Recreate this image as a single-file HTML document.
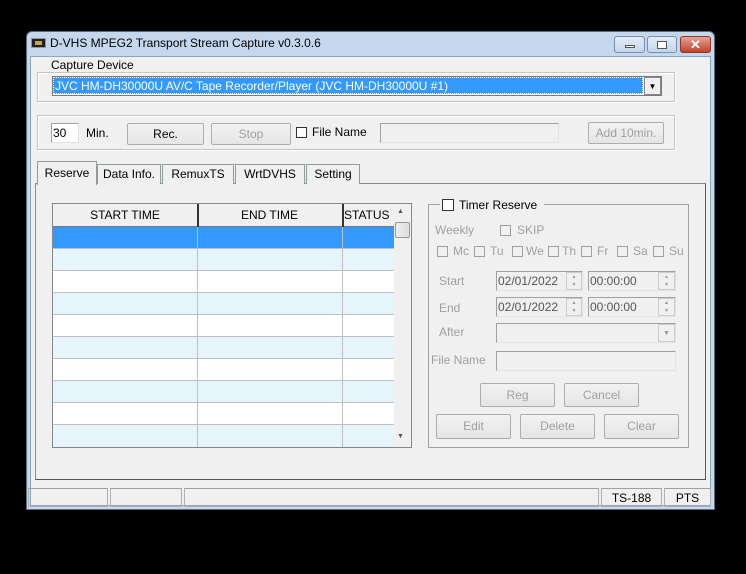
<!DOCTYPE html>
<html><head><meta charset="utf-8"><style>
*{box-sizing:border-box;margin:0;padding:0}
body{width:746px;height:574px;background:#000;position:relative;overflow:hidden;font-family:"Liberation Sans","Noto Sans CJK JP",sans-serif;font-size:12px;color:#000}
.a{position:absolute}
.win{left:26px;top:31px;width:689px;height:479px;background:#c4d7ec;border:1px solid #5a6e86;border-radius:6px 6px 0 0}
.client{left:30px;top:56px;width:681px;height:450px;background:#f0f0f0;border:1px solid #8ea3bd}
.grp{border:1px solid #c4c4c4;box-shadow:1px 1px 0 #fff,inset 1px 1px 0 #fff}
.lbl{background:#f0f0f0;padding:0 2px;white-space:nowrap}
.btn{border:1px solid #adadad;background:linear-gradient(#f2f2f2,#e5e5e5);text-align:center;line-height:20px;border-radius:2px}
.dis{color:#a0a0a0}
.edit{background:#fff;border:1px solid #a0a0a0;border-right-color:#e3e3e3;border-bottom-color:#e3e3e3}
.edd{background:#f0f0f0;border:1px solid #a0a0a0;border-right-color:#e3e3e3;border-bottom-color:#e3e3e3}
.cb{width:11px;height:11px;border:1px solid #333;background:#fff}
.cbd{width:11px;height:11px;border:1px solid #a0a0a0;background:#f0f0f0}
.tab{top:164px;height:20px;border:1px solid #919b9c;border-bottom:none;background:#f0f0f0;line-height:18px;text-align:center}
.row{left:53px;width:341px;height:22px;border-bottom:1px solid #c0c0c0}
.sb{border:1px solid #b0b0b0;border-top-color:#a0a0a0;height:19px;line-height:18px;text-align:center}
.spin{width:16px;height:18px;border:1px solid #ccc;background:#f0f0f0;font-size:5px;color:#999;text-align:center;line-height:8px}
</style></head><body>
<div class="a win"></div>
<div class="a" style="left:31px;top:38px;width:15px;height:10px;background:#222;border:1px solid #999"><div style="margin:2px 3px;height:4px;background:#c9a54a"></div></div>
<div class="a" style="left:50px;top:36px;font-size:12px">D-VHS MPEG2 Transport Stream Capture v0.3.0.6</div>
<div class="a" style="left:614px;top:36px;width:31px;height:17px;border:1px solid #7790b0;border-radius:3px;background:linear-gradient(#e3ecf6,#c4d5ea)"><div style="margin:8px auto 0;width:10px;height:3px;background:#fff;border:1px solid #555"></div></div>
<div class="a" style="left:647px;top:36px;width:30px;height:17px;border:1px solid #7790b0;border-radius:3px;background:linear-gradient(#e3ecf6,#c4d5ea)"><div style="margin:4px auto 0;width:10px;height:8px;border:1px solid #555;background:#fff"></div></div>
<div class="a" style="left:680px;top:36px;width:31px;height:17px;border:1px solid #8b3a2c;border-radius:3px;background:linear-gradient(#e8a293,#c2432c);color:#fff;font-weight:bold;text-align:center;line-height:15px;font-size:13px">✕</div>
<div class="a client"></div>

<div class="a grp" style="left:37px;top:72px;width:638px;height:30px"></div>
<div class="a lbl" style="left:49px;top:58px">Capture Device</div>
<div class="a" style="left:52px;top:76px;width:610px;height:20px;border:1px solid #7a7a7a;background:#fff"></div>
<div class="a" style="left:53px;top:77px;width:590px;height:17px;background:#3399ff;color:#fff;line-height:16px;padding-left:1px;border:1px dotted #fff">JVC HM-DH30000U AV/C Tape Recorder/Player (JVC HM-DH30000U #1)</div>
<div class="a" style="left:644px;top:77px;width:17px;height:18px;background:#f0f0f0;border:1px solid #888;text-align:center;font-size:8px;line-height:17px">▼</div>

<div class="a grp" style="left:37px;top:115px;width:638px;height:35px"></div>
<div class="a edit" style="left:51px;top:123px;width:28px;height:20px;padding-left:1px;line-height:18px">30</div>
<div class="a" style="left:86px;top:126px">Min.</div>
<div class="a btn" style="left:127px;top:123px;width:77px;height:22px">Rec.</div>
<div class="a btn dis" style="left:211px;top:123px;width:80px;height:22px">Stop</div>
<div class="a cb" style="left:296px;top:127px"></div>
<div class="a" style="left:312px;top:125px">File Name</div>
<div class="a edd" style="left:380px;top:123px;width:179px;height:20px"></div>
<div class="a btn dis" style="left:588px;top:122px;width:76px;height:22px">Add 10min.</div>

<div class="a" style="left:35px;top:183px;width:671px;height:297px;border:1px solid #898c95;background:#f0f0f0;border-right-color:#555;border-bottom-color:#555"></div>
<div class="a tab" style="left:97px;width:64px">Data Info.</div>
<div class="a tab" style="left:162px;width:72px">RemuxTS</div>
<div class="a tab" style="left:235px;width:70px">WrtDVHS</div>
<div class="a tab" style="left:306px;width:54px">Setting</div>
<div class="a tab" style="left:37px;top:161px;width:60px;height:24px;line-height:22px;background:#f0f0f0">Reserve</div>

<div class="a" style="left:52px;top:203px;width:360px;height:245px;border:1px solid #828790;background:#fff"></div>
<div class="a" style="left:53px;top:204px;width:341px;height:23px;background:#f0f0f0;border-bottom:1px solid #777"></div>
<div class="a" style="left:53px;top:208px;width:144px;text-align:center">START TIME</div>
<div class="a" style="left:197px;top:204px;width:2px;height:23px;background:#333"></div>
<div class="a" style="left:197px;top:208px;width:145px;text-align:center">END TIME</div>
<div class="a" style="left:342px;top:204px;width:2px;height:23px;background:#333"></div>
<div class="a" style="left:344px;top:208px">STATUS</div>
<div class="a row" style="top:227px;background:#3399ff"></div>
<div class="a row" style="top:249px;background:#e5f5fb"></div>
<div class="a row" style="top:271px;background:#fff"></div>
<div class="a row" style="top:293px;background:#e5f5fb"></div>
<div class="a row" style="top:315px;background:#fff"></div>
<div class="a row" style="top:337px;background:#e5f5fb"></div>
<div class="a row" style="top:359px;background:#fff"></div>
<div class="a row" style="top:381px;background:#e5f5fb"></div>
<div class="a row" style="top:403px;background:#fff"></div>
<div class="a row" style="top:425px;background:#e5f5fb;border-bottom:none"></div>
<div class="a" style="left:197px;top:227px;width:1px;height:220px;background:#c0c0c0"></div>
<div class="a" style="left:342px;top:227px;width:1px;height:220px;background:#c0c0c0"></div>
<div class="a" style="left:394px;top:204px;width:17px;height:243px;background:#f0f0f0"></div>
<div class="a" style="left:397px;top:208px;font-size:7px;color:#555">▲</div>
<div class="a" style="left:395px;top:222px;width:15px;height:16px;border:1px solid #999;background:linear-gradient(90deg,#eee,#ddd);border-radius:2px"></div>
<div class="a" style="left:397px;top:433px;font-size:7px;color:#555">▼</div>

<div class="a grp" style="left:428px;top:204px;width:261px;height:244px;border-color:#a0a0a0;box-shadow:none"></div>
<div class="a lbl" style="left:440px;top:197px;width:104px;height:14px"></div>
<div class="a cb" style="left:442px;top:199px;width:12px;height:12px"></div>
<div class="a" style="left:459px;top:198px">Timer Reserve</div>
<div class="a dis" style="left:435px;top:223px">Weekly</div>
<div class="a cbd" style="left:500px;top:225px"></div>
<div class="a dis" style="left:517px;top:223px">SKIP</div>
<div class="a cbd" style="left:437px;top:246px"></div><div class="a dis" style="left:453px;top:244px">Mc</div>
<div class="a cbd" style="left:474px;top:246px"></div><div class="a dis" style="left:490px;top:244px">Tu</div>
<div class="a cbd" style="left:512px;top:246px"></div><div class="a dis" style="left:526px;top:244px">We</div>
<div class="a cbd" style="left:548px;top:246px"></div><div class="a dis" style="left:562px;top:244px">Th</div>
<div class="a cbd" style="left:581px;top:246px"></div><div class="a dis" style="left:597px;top:244px">Fr</div>
<div class="a cbd" style="left:617px;top:246px"></div><div class="a dis" style="left:633px;top:244px">Sa</div>
<div class="a cbd" style="left:653px;top:246px"></div><div class="a dis" style="left:669px;top:244px">Su</div>
<div class="a dis" style="left:439px;top:274px">Start</div>
<div class="a dis" style="left:439px;top:301px">End</div>
<div class="a dis" style="left:439px;top:325px">After</div>
<div class="a dis" style="left:431px;top:353px">File Name</div>
<div class="a edd" style="left:496px;top:271px;width:87px;height:20px;color:#555;line-height:18px;padding-left:1px;overflow:hidden">02/01/2022</div>
<div class="a edd" style="left:588px;top:271px;width:88px;height:20px;color:#555;line-height:18px;padding-left:1px">00:00:00</div>
<div class="a edd" style="left:496px;top:297px;width:87px;height:20px;color:#555;line-height:18px;padding-left:1px;overflow:hidden">02/01/2022</div>
<div class="a edd" style="left:588px;top:297px;width:88px;height:20px;color:#555;line-height:18px;padding-left:1px">00:00:00</div>
<div class="a spin" style="left:566px;top:272px">▲<br>▼</div>
<div class="a spin" style="left:658px;top:272px;width:17px">▲<br>▼</div>
<div class="a spin" style="left:566px;top:298px">▲<br>▼</div>
<div class="a spin" style="left:658px;top:298px;width:17px">▲<br>▼</div>
<div class="a edd" style="left:496px;top:323px;width:180px;height:20px"></div>
<div class="a" style="left:658px;top:324px;width:17px;height:18px;background:#f0f0f0;border:1px solid #ccc;font-size:7px;color:#999;text-align:center;line-height:17px">▼</div>
<div class="a edd" style="left:496px;top:351px;width:180px;height:20px"></div>
<div class="a btn dis" style="left:480px;top:383px;width:75px;height:24px;line-height:22px">Reg</div>
<div class="a btn dis" style="left:564px;top:383px;width:75px;height:24px;line-height:22px">Cancel</div>
<div class="a btn dis" style="left:436px;top:414px;width:75px;height:25px;line-height:23px">Edit</div>
<div class="a btn dis" style="left:520px;top:414px;width:75px;height:25px;line-height:23px">Delete</div>
<div class="a btn dis" style="left:604px;top:414px;width:75px;height:25px;line-height:23px">Clear</div>

<div class="a sb" style="left:28px;top:488px;width:80px"></div>
<div class="a sb" style="left:110px;top:488px;width:72px"></div>
<div class="a sb" style="left:184px;top:488px;width:415px"></div>
<div class="a sb" style="left:601px;top:488px;width:61px">TS-188</div>
<div class="a sb" style="left:664px;top:488px;width:47px">PTS</div>
</body></html>
